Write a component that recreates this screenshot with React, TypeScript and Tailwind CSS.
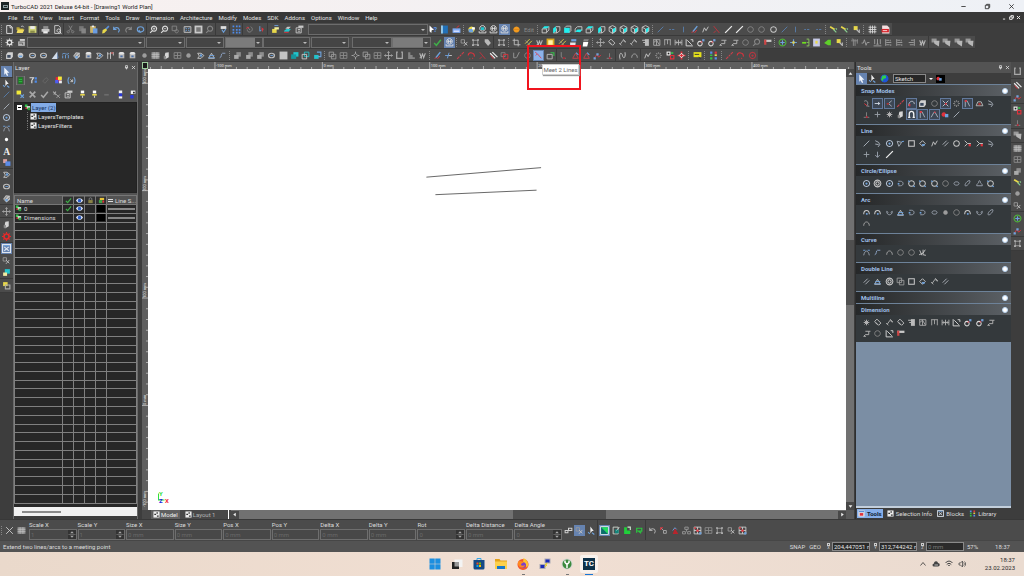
import type { ReactNode } from "react";
import clsx from "clsx";

const W = "#c9c9c9";
const D = "#858585";
const B = "#6ea2dc";
const R = "#e0323c";
const C = "#22c3cc";
const Y = "#e8d84a";
const N = "#35c04a";

const s = (d: string, color = W, width = 1.6) => <path d={d} fill="none" stroke={color} strokeWidth={width} />;
const f = (d: string, color = W) => <path d={d} fill={color} />;

const box = "M3 3h10v10H3z";
const circle = "M8 2.5a5.5 5.5 0 1 0 .01 0z";
const dot = "M8 6a2 2 0 1 0 .01 0z";
const sheet = "M3 1h7l3 3v11H3z";

const glyphs: Record<string, ReactNode> = {
  // files and editing
  new: <>{s(sheet, "#e2e2e2")}{s("M9 1v4h4", "#e2e2e2")}</>,
  open: <>{f("M1 4h5l1 2h6v3H1z", "#b9a53a")}{f("M3 8h12l-3 6H1z", "#f1dc5e")}{s("M9 3c2-2 4-1 5 1", W)}</>,
  save: <>{f("M1 2h14v12H1z", "#cfd27a")}{f("M4 2h8v5H4z", "#ececec")}{f("M4 10h8v4H4z", "#8a8c4a")}</>,
  print: <>{f("M4 2h9v5H4z", "#8f8f8f")}{f("M1 7h14v5H1z", W)}{f("M4 11h8v4H4z", "#ededed")}</>,
  preview: <>{s(sheet)}{s("M10 7a3 3 0 1 0 .01 0zM12 12l3 3", "#e6e6e6")}</>,
  cut: <>{s("M5 1l5 9M11 1L6 10", D)}{s("M4 10a2 2 0 1 0 .01 0zM12 10a2 2 0 1 0 .01 0z", D)}</>,
  copy: <>{f("M2 2h8v9H2z", "#777")}{f("M6 6h8v9H6z", D)}</>,
  paste: <>{f("M2 2h10v12H2z", "#c9b169")}{f("M7 6h8v9H7z", "#6b9ce0")}{f("M5 1h4v3H5z", "#eee")}</>,
  brush: <>{s("M14 2L8 8", "#5c8fd4", 3)}{f("M3 9l5-3 3 3-5 5-4 1z", Y)}</>,
  undo: s("M3 3v5h5M3 8c3-5 9-4 10 1 0 2-1 3-2 4", B, 2),
  redo: s("M13 3v5H8M13 8C10 3 4 4 3 9c0 2 1 3 2 4", D, 2),
  repeat: s("M8 13c-8-1-7-10 0-10s8 9 1 9M5 9l3 4 4-2", B, 2),
  zoomin: <>{s("M9 2a4.500 4.500 0 1 0 .01 0zM6 10l-4 4", "#dedede", 2)}{s("M7 6.500h4M9 4.500v4")}</>,
  zoomout: <>{s("M9 2a4.500 4.500 0 1 0 .01 0zM6 10l-4 4", "#dedede", 2)}{s("M7 6.500h4")}</>,
  zoomwin: <>{s("M2 2h8v8H2z", D)}{s("M10 8a3 3 0 1 0 .01 0z", D)}</>,
  extents: <>{s("M2 3h12v10H2z")}{s("M4 5l3 2M12 5L9 7M4 11l3-2M12 11L9 9", B)}</>,
  fullview: <>{f("M1 1h14v14H1z", W)}{f("M4 4h8v8H4z", "#777")}</>,
  zoomgray: s("M9 2a4.500 4.500 0 1 0 .01 0zM6 10l-4 4", D, 2),
  paint: <>{f("M3 2h10v5H3z", "#dedede")}{s("M5 8l3 5 4-6", B, 2)}</>,
  dots: f("M1 1h3v3H1zM7 1h3v3H7zM12 1h3v3h-3zM1 7h3v3H1zM7 7h3v3H7zM12 7h3v3h-3zM1 12h3v3H1zM7 12h3v3H7zM12 12h3v3h-3z", "#4d8bea"),
  lasso: <>{s("M4 3l5 6M10 3c4 2 4 7 0 9s-6-1-6-4", D)}{s("M2 6l5-2", R)}</>,
  pick: <>{s("M5 2v9l3-2", B)}{f("M8 4l4 3-3 6z", R)}</>,
  layers: <>{f("M2 7h8v7H2z", Y)}{f("M6 4h8v4H6z", "#f3ef9f")}{s("M6 1h7", B)}</>,
  stack: <>{f("M2 10l4-3h8l-4 5H2z", C)}{f("M4 6l4-3h6l-4 4z", W)}{s("M2 13h8", R)}</>,
  props: <>{s("M2 5h9v9H2z")}{f("M6 1h9v4H6z")}{s("M5 8h4M5 11h4")}</>,
  help: <>{f("M1 1l8 8H5l-1 5-3-3z", "#fff")}<text x="8" y="12" fontSize="13" fontWeight="700" fill="#5b95e8">?</text></>,
  book: <>{f("M2 1h12v14H2z", "#2271b8")}{f("M2 1h3v14H2z", "#a5d5ef")}</>,
  toolbox: <>{f("M1 6h14v8H1z", "#7daaf5")}{s("M8 5l5-4", R)}{f("M3 10h10v2H3z", "#eef")}</>,
  gear: <>{s("M8 4a4 4 0 1 0 .01 0z", "#e0e0e0", 2.5)}{s("M8 1v2M8 13v2M1 8h2M13 8h2M3 3l2 2M11 11l2 2M13 3l-2 2M3 13l2-2", "#e0e0e0", 1.8)}</>,
  printset: <>{f("M2 6h12v8H2z", "#b7b7b7")}{f("M5 2h9v3H5z", "#ddd")}{s("M4 9h6v3", "#555")}</>,
  // work planes and views
  globe: <>{f(circle, Y)}{f("M3 7h8v6H3z", B)}{f("M9 4h5v4H9z", "#fff")}</>,
  globe2: <>{s("M8 1a5 5 0 1 0 .01 0z", "#ddd")}{f("M5 4h6v5H5z", C)}{s("M2 11v3h12v-3", "#ddd")}</>,
  globe3: <>{s("M8 1a5 5 0 1 0 .01 0z", "#ddd")}{s("M4 6h8M6 3v6M10 3v6M2 11v3h12v-3", "#ddd")}</>,
  sphere: <>{f(circle, "#f39a1e")}{s("M3 8h10", "#e08818")}</>,
  cubeTop: <>{f("M2 6l4-4h9l-4 4z", "#2ee")}{s("M2 7h8v7H2zM10 13l4-4V3")}</>,
  cubeLeft: <>{f("M2 6l5-4v9l-5 4z", "#2ee")}{s("M7 3h7v7l-5 4H3M8 14V6")}</>,
  cubeFront: <>{f("M2 5h10v9H2z", "#2ee")}{s("M3 5l3-3h8v8l-3 3")}</>,
  cubeIso: <>{f("M8 7l6-3v7l-6 4z", "#2ee")}{s("M8 1l6 3v7l-6 4-6-4V4zM2 4l6 3v8")}</>,
  cubeBase: <>{f("M2 12l4-4h9l-4 5z", "#2ee")}{s("M2 7l4-4h8v7M2 7v6")}</>,
  // lines
  line: s("M3 13L13 3", "#aeb5c0"),
  lineW: s("M2 14L14 2", "#eee", 2.2),
  lineB: s("M3 13L13 3", "#587fae"),
  lineR: s("M2 14l4-4M10 6l4-4M7 9l2-2", "#c8414b", 2),
  dash: s("M4 8h3M9 8h4", "#587fae"),
  vert: s("M8 3v10", "#587fae"),
  perp: <>{s("M3 13h10M8 13V4", D)}{f("M7 11h3v3H7z", "#b23")}</>,
  polyline: s("M3 13L6 5l3 5 4-7", W),
  poly2: <>{s("M2 4l8 2-5 7z", "#aeb5c0")}{s("M10 5l4-1", B, 2)}</>,
  arrowSel: f("M4 1l9 9H9l2 5-2 1-3-5-2 3z", "#eef3fb"),
  node: <>{f("M6 1l6 8H9l-3 4z", "#eee")}{s("M2 11l3 3M9 12l4 3", B, 2)}</>,
  circle: s("M8 3a5 5 0 1 0 .01 0z", W, 1.8),
  circleB: <>{s("M8 2.500a5.500 5.500 0 1 0 .01 0z", "#b7c4d6", 1.8)}{f(dot, B)}</>,
  circle2: s("M8 2a6 6 0 1 0 .01 0zM8 5a3 3 0 1 0 .01 0z", W, 1.8),
  circleP: <>{s("M8 3a5 5 0 1 0 .01 0z", W, 1.8)}{s("M2 3l3 2M11 12l3 2", B, 2)}</>,
  circleD: s("M8 3a5 5 0 1 0 .01 0z", D),
  ellipse: s("M8 5C2 5 2 11 8 11s6-6 0-6z", "#9ea6b2"),
  ellipseT: s("M12 3C8 2 2 10 4 12S14 6 12 3z", "#9ea6b2"),
  arc: <>{s("M3 11C3 2 13 2 13 11", W, 1.8)}{f("M7 9h3v3H7z", B)}</>,
  arcG: s("M3 12C3 3 13 3 13 12", "#a6a6a6", 1.6),
  arcR: <>{s("M2 8c1-7 12-6 11 2", R, 1.8)}{s("M4 14h2M9 13h2", R)}</>,
  arcD: <>{s("M4 4h4c6 0 6 8 0 8H4", "#9ea6b2")}{f("M3 7h3v3H3z", B)}</>,
  arcS: <>{s("M3 12h10c0-3-2-4-3-5s0-4-2-4-1 3-2 4-3 2-3 5z", "#9ea6b2")}</>,
  bowl: s("M3 6c0 8 10 8 10 0l-3 2M3 6l3 2", "#9ea6b2"),
  point: f("M8 5a3 3 0 1 0 .01 0z", "#fff"),
  text: <text x="2" y="14" fontFamily="Liberation Serif" fontSize="17" fontWeight="700" fill="#eee">A</text>,
  square: s(box, W, 1.8),
  diamond: <>{s("M8 3l5 5-5 5-5-5z", W, 1.6)}{f("M7 9h5v3H7z", B)}</>,
  double: s("M3 10l7-7M6 13l7-7", "#b5bac2", 1.6),
  doubleR: <>{s("M2 4l9 9M6 2l9 9", "#eee", 2)}{s("M3 8l5 6", R)}</>,
  fork: <>{s("M3 3l5 5-5 5M8 8h6", W)}{f("M10 9h4v4h-4z", R)}</>,
  hook: s("M4 3l6 3 2 4-3 4M4 9l6 1", "#aeb5c0"),
  arrowDown: s("M8 3v10M4 9l4 4 4-4", "#9ea6b2"),
  bezier: <>{s("M3 13C5 3 11 3 13 13", "#9ea6b2")}{s("M2 4h4M10 4h4", B, 1.6)}</>,
  wave: s("M3 12C7 12 5 4 8 4h5", "#8fa6c8"),
  spline: <>{s("M3 13C2 1 7 3 8 8s5 7 5-5")}{f("M2 12h3v3H2zM11 2h3v3h-3z", D)}</>,
  wcurve: s("M3 4l4 9M2 12l7-3 4-6M9 3v9l5 1", W),
  // solids
  solid: <>{f("M5 2h9v8l-3 4H2V6z", "#d2d2d2")}{f("M4 7h6v5H4z", "#3d4b60")}</>,
  ball: <>{f("M8 3a5 5 0 1 0 .01 0z", W)}{f("M5 8h6v3H5z", B)}</>,
  ballG: f("M8 4a4 4 0 1 0 .01 0z", "#9c9c9c"),
  torus: <>{s("M8 4C1 4 1 12 8 12s7-8 0-8z", "#bdbdbd", 2.2)}{s("M6 8h5", B)}</>,
  cylinder: <>{f("M3 4h10v9H3z", "#b5b5b5")}{f("M3 4c0-3 10-3 10 0s-10 3-10 0z", "#e3e3e3")}{f("M6 8h4v3H6z", "#4b6fa8")}</>,
  cone: <>{f("M13 1v13H3z", "#d2dbe8")}{f("M13 1l2 11-2 2z", "#6991c9")}</>,
  sweep: <>{s("M2 6c5-5 7 3 12-2M3 8v5M8 7v6M13 7v6", B)}</>,
  tube: <>{f("M2 9l5-7 7 1v7l-6 5z", "#c4c4c4")}{s("M4 10l5-6M8 12l5-6", "#555", 1.2)}{f("M6 9h4v4H6z", B)}</>,
  grid: <>{f("M1 2h14v12H1z", "#8f8f8f")}{s("M1 6h14M1 10h14M5.500 2v12M10.500 2v12", "#ccc", 1)}</>,
  gridW: s("M4 1v14M8 1v14M12 1v14M1 4h14M1 8h14M1 12h14", "#ddd", 1.5),
  bool: <>{f("M6 2h8v8H6z", "#8d8d8d")}{f("M2 7h8v7H2z", "#aaa")}</>,
  boolC: <>{f("M6 2h9v8H6z", C)}{f("M2 6h9v8H2z", "#1597a0")}</>,
  boolO: <>{s("M6 2h8v8H6z", C)}{s("M2 6h8v8H2z", W)}</>,
  boolM: <>{f("M2 7h8v7H2z", C)}{s("M7 2h7v8H9", B, 2)}</>,
  blank: f("M1 1h14v14H1z", "#c4c4c4"),
  loop: <>{s("M3 4h6l5 4-5 5H3l3-4z", W)}{f("M7 6h4v4H7z", B)}</>,
  fence: <>{s("M3 2v12M8 2v12M13 2v6M2 5h3M6 5h3", W)}{f("M9 2h4v3H9z", "#b66")}</>,
  prism: <>{s("M3 13L8 4l5 9z")}{s("M4 8h9M2 12h12", B)}</>,
  // modify
  copyO: <>{s("M2 2h8v8H2z", "#9b9b9b")}{s("M6 6h8v8H6z", "#9b9b9b")}</>,
  windows: s("M2 3h12v10H2zM2 8h12M8 3v10", "#8b8b8b"),
  move: s("M8 1v14M1 8h14M6 3l2-2 2 2M6 13l2 2 2-2M3 6L1 8l2 2M13 6l2 2-2 2", "#a8a8a8"),
  target: <>{s("M8 4l4 4-4 4-4-4z", "#aaa")}{s("M8 1v3M8 12v3M1 8h3M12 8h3", "#aaa")}</>,
  cup: s("M3 2v11h10V2M5 2H2M14 2h-3", "#a9a9a9", 2.2),
  stair: f("M2 2h4v5h4v4h4v3H2z", "#858585"),
  mirror: s("M3 4l3 8 2-8 2 8 3-8M3 12h3", "#b7b7b7", 1.8),
  pen: <>{s("M13 2L5 12", B, 2.4)}{s("M3 14l3-3M8 14l4-5", R)}</>,
  tee: <>{s("M2 8h7M9 3L6 13", B)}{s("M9 8h5", W)}</>,
  trim: <>{s("M3 2l10 12", "#c4323c", 1.6)}{s("M3 14l4-4", "#c4323c")}</>,
  squares: <>{s("M2 3h7v7H2z", D)}{s("M6 6h8v8H6z", R)}</>,
  jcurve: s("M3 3v9h4M13 2l-5 10", "#9a9a9a"),
  meet: <>{f("M0 0h16v16H0z", "#8db3ea")}{s("M2 2l4 3M3 8l3-3 7 8", "#d04a5a")}</>,
  chamfer: <>{s("M2 6h9v8H2z", "#bbb")}{s("M8 3h6v6", N, 2)}</>,
  corner: <>{s("M4 2v7c0 3 2 4 8 4", "#8a8a8a")}{f("M7 11h4v3H7z", "#a02a35")}</>,
  tri: <>{s("M3 13h10L8 4z", "#c7434d")}{s("M9 3l4 4", B, 2)}</>,
  zig: <>{s("M2 13l5-7 3 5 4-4", R)}{f("M1 11h4v4H1zM6 4h4v4H6z", B)}</>,
  ring: s("M8 2v3M8 11v3M2 8h3M11 8h3M4 4l2 2M10 10l2 2M12 4l-2 2M4 12l2-2", "#888", 2),
  blocksR: <>{f("M1 1h7v7H1z", "#eee")}{f("M3 3h3v3H3z", "#222")}{s("M8 8h6v6H8z", R, 2)}{f("M9 2h4v3H9z", N)}</>,
  moveR: <>{s("M8 1v14M1 8h14", R, 3)}{s("M8 4l4 4-4 4-4-4z", "#fff", 1.6)}</>,
  note: <>{f("M1 2h14v9H1z", "#e5e01c")}{s("M3 6h8M10 11l4 3", "#333")}</>,
  rgb: <>{f("M2 1h4v4H2zM10 11h4v4h-4z", "#5b8de8")}{f("M10 1h4v4h-4z", R)}{f("M2 11h4v4H2zM2 6h4v3H2z", N)}{f("M10 6h4v3h-4z", Y)}</>,
  rec: <>{s(circle, "#b23640", 2)}{f(dot, "#b23640")}</>,
  check: <>{s("M2 9l4 4 8-10", "#3fae49", 2.6)}</>,
  checkG: s("M2 9l4 4 8-10", "#a8a8a8", 2.6),
  cross: s("M3 3l10 10M13 3L3 13", "#a8a8a8", 3),
  crossW: s("M2 2l12 12M14 2L2 14", "#c9c9c9", 1.6),
  ungroup: <>{s("M2 3h6v6H2z", "#999")}{s("M7 7l6 6M13 7l-6 7", "#c0c0c0")}</>,
  select4: <>{s("M4 4h8v8H4z", "#a0a0a0")}{f("M2 2h3v3H2zM11 2h3v3h-3zM2 11h3v3H2zM11 11h3v3h-3z", "#bbb")}</>,
  tag: f("M3 2h6l5 7-5 5-6-7z", "#b9b9b9"),
  crop: s("M4 1v11h11M1 4h10v11", "#bdbdbd"),
  yellowbox: <>{f("M1 1h14v14H1z", "#d9a821")}{f("M4 4h8v8H4z", "#fff2a8")}</>,
  hatch: <>{s("M2 10l8-8M5 14l9-9", Y)}{s("M2 4l10 10", D)}</>,
  sheetB: <>{f("M4 2h9v4H4z", B)}{f("M2 8h10l-1 6H2z", "#e5e5e5")}</>,
  sheetW: <>{f("M5 2h9l-2 4H4z", "#888")}{f("M4 7h9l-2 8H3z", "#fff")}</>,
  // dimension
  dimH: s("M2 3v10M14 3v10M8 3v10M3 8h10M5 6L3 8l2 2M11 6l2 2-2 2", "#b5b5b5"),
  dimA: s("M3 6l4-4 7 7-4 4zM4 8l4 4", "#c5c5c5", 1.6),
  dimB: s("M2 9l4 4M4 11l5-7 4 4M9 2l5 5", "#b5b5b5"),
  dimBox: <>{f("M7 2h7v12H7z", "#bbb")}{s("M2 4h6M4 8h3", W)}</>,
  dimGrid: s("M2 3h12v10H3V3M3 8l5-4 5 8M8 3v10", "#a9a9a9"),
  dimT: s("M2 3h12M3 3v10M8 3v8M13 3v10", "#a9a9a9"),
  dimX: s("M2 2v12h12M4 4l8 8M10 3h4v4", "#ddd"),
  dimR: <>{s("M7 6a4 4 0 1 0 .01 0z", "#ddd", 1.8)}{s("M8 9l5-6", R)}{f("M11 2h4v4h-4z", B)}</>,
  leader: s("M3 13l3-3h6V4H6M3 13h4M12 4h3", "#b9b9b9"),
  flag: <>{f("M2 3h13v4H2z", W)}{f("M2 3h4v9H2z", "#c44")}</>,
  // snaps
  snapG: <>{s("M8 2a6 6 0 1 0 .01 0z", "#4fae3a", 2)}{s("M8 4v8M4 8h8", B, 2)}</>,
  plusB: <>{s("M8 2v12M2 8h12", B, 2)}{f("M6 6h4v4H6z", Y)}</>,
  greenR: <>{f("M2 7h7v3H2z", "#6fe01e")}{s("M10 2h4M10 8h4M10 14h4M14 2v12", "#7fae5a", 2)}</>,
  greenL: f("M14 3v10H9l-7-4 7-6z", "#5fcf2a"),
  winY: <>{f("M2 1h12v14H2z", "#c8cbe8")}{f("M6 5h4v5H6z", Y)}</>,
  bulb: <>{f("M3 2h7v7H3z", Y)}{s("M8 8l5 5M13 8v6", "#bbb", 2)}</>,
  wand: <>{s("M2 3l8 5", Y, 3)}{s("M8 8l5 5M12 6l2 2", "#8ad08f", 2)}</>,
  pipes: s("M3 2h3v12M9 2v12M13 2v8M2 5h12", "#8f8f8f"),
  pulse: s("M1 9h3l2-6 3 10 2-5h4", "#9f9f9f"),
  forest: s("M3 2v9M8 2v9M13 2v9M1 14h14M6 11h4", "#a0a0a0"),
  alignL: s("M3 2v12M4 4h5M4 8h9M4 12h6M11 3v3M12 11v3", "#a0a0a0"),
  alignR: s("M13 2v12M12 4H7M12 8H3M12 12H5", "#a0a0a0"),
  order: <>{f("M1 1h9v7H1z", "#989898")}{f("M5 5h10l-1 10-8-5z", "#b7b7b7")}</>,
  pdf: <>{f("M2 1h9l4 4v10H2z", "#f4dede")}{f("M1 7h13v6H1z", "#d61f26")}{s("M3 10h8", "#fff", 1.4)}</>,
  snapNo: <>{s("M4 4c5-4 9 5 4 8M8 12l5 1", "#9aa0a8")}{s("M4 8l5 4", R)}</>,
  snapV: <>{s("M3 8h7", "#d0d8e4")}{f("M9 5l4 3-4 3z", "#d0d8e4")}</>,
  snapMid: <>{s("M5 9l7-6M6 8l6 5", "#aeb5c0")}{f("M3 7h4v3H3z", "#a33")}</>,
  snapX: <>{s("M3 3l10 10M13 3L3 13", "#c3cad4")}{f("M7 7h3v3H7z", R)}</>,
  snapQ: <>{s("M3 12C3 2 13 2 13 9", "#c3cad4")}{f("M3 9h3v4H3z", R)}</>,
  star: s("M8 3v10M3 8h10M4.500 4.500l7 7M11.500 4.500l-7 7", "#b6b6b6", 1.7),
  plus: s("M8 3v10M3 8h10", "#9aa0a8"),
  magnet: s("M4 14V7c0-6 8-6 8 0v7M2 13h4M10 13h4", "#f2f2f2", 2.4),
  snapR: <>{s("M4 14V3h3l5 10", "#aeb5c0")}{f("M3 2h4v3H3z", R)}</>,
  tent: <>{s("M2 13L7 4h2l5 9", "#aeb5c0")}{f("M7 3h3v2H7z", R)}</>,
  ballR: <>{f("M5 4a4 4 0 1 0 .01 0z", R)}{f("M7 7h6v6H7z", B)}</>,
  trap: <>{s("M2 12h12l-3-7H5z", "#bbb")}{f("M6 7h4v4H6z", "#a33")}</>,
  // layers panel
  green: <>{s("M1 0h14v16H1z", "#8a8a8a", 1.2)}{f("M4 2h8v12H4z", "#1e7a25")}{s("M5 6h6M5 10h6", N)}</>,
  filter: <>{s("M1 3h7L5 8v5", "#ddd", 2)}{f("M10 2h4v4h-4zM10 8h4v4h-4z", "#4d8bea")}</>,
  eraser: s("M3 9l6-6 4 3-6 7z", "#666"),
  palette: <>{f("M3 2h9v8H3z", "#e23")}{f("M7 1h7v6H7z", "#f6e73c")}{f("M2 7h6v6H2z", "#4d5df0")}{f("M9 8h5v5H9z", "#eee")}</>,
  sync: <>{s("M4 2C1 5 1 11 4 14M12 2c3 3 3 9 0 12", B, 2)}{s("M6 6l4 4M10 6v4H6", W)}</>,
  addLayer: <>{f("M1 1h8v7H1z", "#f1ea3a")}{s("M8 8l6 6M14 8l-6 6", B, 2)}</>,
  delSel: <>{s("M2 3l6 6M7 3L3 8", "#aaa", 2)}{s("M8 8l6 6M14 8l-6 6", "#aaa", 1.5)}</>,
  bulbs: <>{f("M5 1h6v5H5z", "#fff")}{f("M4 7h8v3H4z", Y)}{s("M8 10v4", W, 2)}</>,
  minus: f("M4 7h8v3H4z", "#6c6c6c"),
  eyes: <>{f("M5 1h6v5H5zM5 11h6v4H5z", "#f2f2f2")}{f("M5 6h6v5H5z", "#2a38d8")}</>,
  eyes2: <>{f("M5 1h8v6H5z", "#f2f2f2")}{f("M4 9h6v6H4z", "#2a38d8")}{f("M9 3h3v3H9z", "#222")}</>,
  eye: <>{f("M0 8c4-7 12-7 16 0-4 7-12 7-16 0z", "#dfe7f7")}{f("M8 4a4 4 0 1 0 .01 0z", "#2f5fc4")}</>,
  lock: <>{s("M5 7V4c0-3 6-3 6 0v3", "#999")}{f("M3 7h10v7H3z", "#8a8347")}</>,
  layerIcon: <>{f("M2 1h6v6H2z", N)}{f("M6 5h8v6H6z", "#f0f0f0")}{f("M8 8h6v6H8z", "#2fa03c")}{f("M3 8h4v3H3z", R)}</>,
  tile: <>{f("M1 1h14v14H1z", "#ededed")}{f("M3 6h4v3H3zM8 3h3v3H8zM9 10h4v3H9z", "#333")}</>,
  // side toolbars
  shapeB: <>{f("M2 2h7v7H2z", "#d9a0a0")}{f("M6 6h9v8H6z", "#5a8be8")}</>,
  slab: <>{f("M6 3l6-1v9l-7 4V7z", "#d6d6d6")}{f("M3 9h4v5H3z", "#8a8a8a")}</>,
  gearR: <>{s("M8 3.500a4.500 4.500 0 1 0 .01 0z", "#e82a2a", 3)}{s("M8 0v3M8 13v3M0 8h3M13 8h3M2.500 2.500l2 2M11.500 11.500l2 2M13.500 2.500l-2 2M2.500 13.500l2-2", "#e82a2a", 2)}</>,
  frameX: <>{s("M1 1h14v14H1z", "#dfe6ef", 2)}{s("M4 5l8 7M12 5l-8 7", "#dfe6ef", 1.8)}{s("M3 3h10", B, 2)}</>,
  yellowC: <>{f("M5 2h9v8H5z", C)}{f("M2 8h7v6H2z", "#f2eca0")}</>,
  spark: <>{f("M2 2h8v7H2z", Y)}{s("M6 7h8v7H6z", "#aaa", 2)}</>,
  drop: <>{f("M4 2h10v5H4z", "#e7c33a")}{f("M2 7h8v7H2z", "#3da445")}{f("M10 8h4v5h-4z", R)}</>,
  earth: <>{f("M8 1a7 7 0 1 0 .01 0z", "#1f55d8")}{f("M4 3l6-1 1 5-5 2-1 4-3-3z", "#2fd04a")}</>,
  // inspector
  link: <>{s("M2 12h5V8H2zM8 4h6v4H8zM7 8l2-2", "#d0d0d0", 1.8)}</>,
  greenTri: <>{s("M1 1h14v14H1z", "#dfe8ef", 1.6)}{f("M2 2h12v12z", "#1fe05a")}{f("M2 2l12 12H2z", "#0b6f6a")}</>,
  greenTri2: <>{s("M2 2h9v12H2z", "#cfd8cf")}{f("M5 6h7v7H5z", "#14857a")}{s("M8 8l5-6", W)}</>,
  greenL2: <>{f("M2 2h5v6h6v6H2z", "#20d03a")}{s("M8 2h5v5", "#cfe8cf", 2)}</>,
  greenQ: s("M3 12V4h9v5H6l5 4", "#2bc53f", 2.2),
  redgrid: <>{s("M2 2h12v12H2zM2 8h12M8 2v12", "#ccc")}{f("M6 6h4v4H6zM2 2h3v3H2z", R)}{f("M11 11h4v4h-4z", B)}</>,
  toolsTab: <>{f("M1 1h14v14H1z", "#e4e4e4")}{f("M2 2h12v3H2z", "#5b8fd8")}{f("M4 7h8v6H4z", R)}</>,
  scaleR: <>{s("M3 3l5 5M8 8h5v5H8z", "#aaa")}{s("M3 3h4M3 3v4", R, 2)}</>,
  redTri: <>{f("M7 4l6 10H3z", "#b8242c")}{s("M3 8l4-5 3 3", B)}</>,
  tree: s("M5 2h6v4H5zM1 10h5v4H1zM10 10h5v4h-5zM8 6v4", "#999"),
  undoG: s("M3 3v5h5M3 8c3-5 9-4 10 1 0 2-1 3-2 4", "#a8a8a8", 1.8),
};

type IconProps = { name: string; outlined?: boolean; children?: ReactNode };

const IconBtn = ({ name, outlined, children }: IconProps) => {
  const active = name.endsWith("*");
  const key = active ? name.slice(0, -1) : name;
  return (
    <div className="relative flex min-h-0 min-w-0 flex-1 items-center justify-center">
      <button
        type="button"
        aria-label={key}
        className={clsx(
          "flex h-[11px] w-[11px] shrink-0 items-center justify-center hover:bg-[#66758c]",
          active && (outlined ? "border border-[#62799c] bg-[#3c4654]" : "bg-[#6683b0]"),
        )}
      >
        <svg viewBox="0 0 16 16" className="h-[9px] w-[9px] shrink-0" aria-hidden="true">
          {glyphs[key]}
        </svg>
      </button>
      {children}
    </div>
  );
};

const Icons = ({ names, className }: { names: string; className: string }) => (
  <div className={clsx("flex shrink-0", className)}>
    {names.split(" ").map((name, i) => (
      <IconBtn key={i} name={name} />
    ))}
  </div>
);

const Grip = () => (
  <div className="flex w-[4px] shrink-0 items-center gap-px pl-px">
    <i className="h-[9px] w-px border-l border-dotted border-[#858585]" />
  </div>
);

const Gap = () => <div className="w-[2px] shrink-0 border-l border-[#3a3a3a]" />;

const Combo = ({ label, className, filled }: { label: string; className: string; filled?: boolean }) => (
  <div className={clsx("relative h-[11px] shrink-0 self-center border border-[#6c6c6c]", className)}>
    <select
      aria-label={label}
      className={clsx("block h-full w-full appearance-none", filled ? "border-r-[7px] border-[#484848] bg-[#7b7b7b]" : "bg-[#454545]")}
    />
    <i className="pointer-events-none absolute top-[4px] right-[2px] border-x-[2px] border-t-[2px] border-x-transparent border-t-[#bcbcbc]" />
  </div>
);

const Bar = ({ children }: { children: ReactNode }) => (
  <div className="flex h-[13px] w-fit border-b border-[#3a3a3a] bg-[#4b4b4b]">{children}</div>
);

const menus = ["File", "Edit", "View", "Insert", "Format", "Tools", "Draw", "Dimension", "Architecture", "Modify", "Modes", "SDK", "Addons", "Options", "Window", "Help"];

function TitleBar() {
  return (
    <header className="flex h-[12px] shrink-0 items-center bg-linear-to-r from-[#f8f0ef] to-[#eef1f6] text-[#222]">
      <div className="ml-[1px] flex h-[8px] w-[8px] items-center justify-center bg-[#1c2326]">
        <i className="h-[3px] w-[5px] border border-[#8a9a9e]" />
      </div>
      <h1 className="ml-[2px] text-[6px]">TurboCAD 2021 Deluxe 64-bit - [Drawing1 World Plan]</h1>
      <div className="mr-[9px] ml-auto flex gap-[17px]">
        {["M3 8h10", "M3 5h8v8H3zM6 5V3h7v7h-2", "M3 3l10 10M13 3L3 13"].map((d, i) => (
          <button key={i} type="button" aria-label={["Minimize", "Restore", "Close"][i]}>
            <svg viewBox="0 0 16 16" className="h-[7px] w-[7px]">{s(d, "#222", 1.8)}</svg>
          </button>
        ))}
      </div>
    </header>
  );
}

function MenuBar() {
  return (
    <nav className="flex h-[11px] shrink-0 items-center bg-[#383838] pl-[8px] text-[6px] text-[#e4e4e4]">
      <div className="flex gap-[6px]">
        {menus.map((m) => (
          <button key={m} type="button">{m}</button>
        ))}
      </div>
      <div className="mr-[3px] ml-auto flex gap-[2px]">
        {["M3 13h7", "M2 6h8v8H2zM6 6V2h8v8h-4", "M3 3l10 10M13 3L3 13"].map((d, i) => (
          <button key={i} type="button" aria-label={["Minimize drawing", "Restore drawing", "Close drawing"][i]}>
            <svg viewBox="0 0 16 16" className="h-[5px] w-[5px]">{s(d, "#eee", 3)}</svg>
          </button>
        ))}
      </div>
    </nav>
  );
}

function Toolbars() {
  return (
    <div className="shrink-0 bg-[#3d3d3d]">
      <Bar>
        <Grip />
        <Icons className="w-[34px]" names="new open save" />
        <Gap />
        <Icons className="w-[23px]" names="print preview" />
        <Gap />
        <Icons className="w-[46px]" names="cut copy paste brush" />
        <Icons className="w-[35px]" names="undo redo repeat" />
        <Gap />
        <Icons className="w-[67px]" names="zoomin zoomout zoomwin extents fullview zoomgray" />
        <Gap />
        <Icons className="w-[12px]" names="paint" />
        <Gap />
        <Icons className="w-[11px]" names="dots" />
        <Gap />
        <Icons className="w-[23px]" names="lasso pick" />
        <Gap />
        <Icons className="w-[37px]" names="layers stack props" />
        <Combo label="View" className="ml-[2px] w-[120px]" />
        <Icons className="w-[34px]" names="help book toolbox" />
        <Grip />
        <Icons className="w-[44px]" names="globe globe2 globe3 globe3*" />
        <Icons className="w-[12px]" names="sphere" />
        <button type="button" className="w-[14px] text-[6px] text-[#8a8a8a]">Edit</button>
        <Grip />
        <Icons className="w-[111px]" names="cubeTop cubeLeft cubeFront cubeBase cubeTop cubeLeft cubeIso cubeIso cubeIso cubeIso" />
        <Grip />
        <Icons className="w-[135px]" names="lineB dash vert pen polyline trim lineW lineW circleD circleD circle lineB" />
        <Icons className="w-[34px]" names="vert dash dash" />
        <Grip />
        <Icons className="w-[34px]" names="wand wand bulb" />
        <Grip />
        <Icons className="w-[26px]" names="gridW pdf" />
      </Bar>
      <Bar>
        <Grip />
        <Icons className="w-[23px]" names="gear printset" />
        <Combo label="Layer" className="w-[118px]" />
        <Combo label="Colour" className="ml-px w-[39px]" />
        <Combo label="Line style" className="ml-px w-[38px]" />
        <Combo label="Line width" className="ml-px w-[38px]" filled />
        <Combo label="Line scale" className="w-[47px]" />
        <Combo label="Brush style" className="ml-px w-[38px]" />
        <Combo label="Brush colour" className="ml-[3px] w-[40px]" />
        <Combo label="Brush pattern" className="w-[39px]" filled />
        <Icons className="w-[24px]" names="check globe3*" />
        <Grip />
        <Icons className="w-[34px]" names="ungroup select4 tag" />
        <Gap />
        <Icons className="w-[12px]" names="select4" />
        <Grip />
        <Icons className="w-[80px]" names="crop hatch mirror yellowbox hatch sheetB sheetW" />
        <Grip />
        <Icons className="w-[178px]" names="move dimA dimB dimB dimBox dimGrid dimT dimH dimX dimR dimR leader leader circleD zoomgray flag" />
        <Grip />
        <Icons className="w-[68px]" names="snapG plusB greenR winY greenL bulb" />
        <Grip />
        <Icons className="w-[79px]" names="pipes pulse forest alignL alignL alignR mirror" />
        <Gap />
        <Icons className="w-[45px]" names="order order order order" />
      </Bar>
      <Bar>
        <Grip />
        <Icons className="w-[224px]" names="solid ball torus torus cone sweep tube cylinder loop fence cylinder cylinder ballG grid slab windows ballG loop prism wave" />
        <Grip />
        <Icons className="w-[91px]" names="bool bool bool torus blank boolC boolO boolM" />
        <Grip />
        <Icons className="w-[101px]" names="copyO windows target copyO windows move cup stair mirror" />
        <Grip />
        <Icons className="w-[101px]" names="pen tee lineR arcR trim doubleR squares jcurve circleD" />
        <div className="flex w-[11px]">
          <IconBtn name="meet*">
            <div className="pointer-events-none absolute -top-[4px] -left-[6px] z-10 h-[45px] w-[54px] border-2 border-[#f0141e]">
              <div role="tooltip" className="mt-[17px] ml-[13px] w-[37px] border border-[#d0d0d0] bg-white text-center text-[6px] leading-[9px] whitespace-nowrap text-[#6a6a6a] shadow-[1px_1px_1px_#999]">
                Meet 2 Lines
              </div>
            </div>
          </IconBtn>
        </div>
        <Icons className="w-[12px]" names="chamfer" />
        <Gap />
        <Icons className="w-[57px]" names="corner tri tri zig perp" />
        <Gap />
        <Icons className="w-[23px]" names="spline arcG" />
        <Gap />
        <Icons className="w-[45px]" names="polyline ring blocksR moveR" />
        <Grip />
        <Icons className="w-[12px]" names="note" />
        <Grip />
        <Icons className="w-[13px]" names="rgb" />
        <Grip />
        <Icons className="w-[34px]" names="lineR arcR rec" />
      </Bar>
    </div>
  );
}

const VIcons = ({ names, className }: { names: string; className: string }) => (
  <div className={clsx("flex flex-col border-b border-[#3a3a3a]", className)}>
    {names.split(" ").map((name, i) => (
      <IconBtn key={i} name={name} />
    ))}
  </div>
);

const PanelTitle = ({ children }: { children: string }) => (
  <div className="flex h-[11px] shrink-0 items-center bg-[#535353] px-[1px] text-[6px] text-[#e4e4e4]">
    <h2>{children}</h2>
    <div className="ml-auto flex gap-[2px]">
      {["M5 2h6v7H5zM3 9h10M8 9v5", "M3 3l10 10M13 3L3 13"].map((d, i) => (
        <button key={i} type="button" aria-label={`${i ? "Close" : "Pin"} ${children}`}>
          <svg viewBox="0 0 16 16" className="h-[5px] w-[5px]">{s(d, "#ddd", 2.6)}</svg>
        </button>
      ))}
    </div>
  </div>
);

const Glyph = ({ name }: { name: string }) => (
  <svg viewBox="0 0 16 16" className="h-[7px] w-[7px] shrink-0" aria-hidden="true">{glyphs[name]}</svg>
);

const layerRows = [
  { name: "0", checked: true },
  { name: "Dimensions", checked: false },
];

function LayerPanel() {
  return (
    <aside className="flex w-[125px] shrink-0 flex-col border-x border-[#6a6a6a] bg-[#535353]">
      <PanelTitle>Layer</PanelTitle>
      <div className="flex h-[14px] shrink-0">
        <Icons className="w-[64px]" names="green filter eraser palette sync" />
      </div>
      <div className="flex h-[15px] shrink-0">
        <Icons className="w-[60px]" names="addLayer cross checkG delSel props" />
        <Icons className="ml-[3px] w-[35px]" names="bulbs bulbs minus" />
        <Icons className="ml-[2px] w-[24px]" names="eyes eyes2" />
      </div>
      <ul className="mb-[2px] h-[91px] shrink-0 border border-[#222] bg-[#272727] text-[6px] leading-[9px] whitespace-nowrap text-[#e4e4e4]">
        <li className="flex items-center pl-[2px]">
          <i className="mr-[2px] flex h-[5px] w-[5px] items-center bg-white px-px"><b className="h-px w-full bg-black" /></i>
          <Glyph name="layerIcon" />
          <span className="bg-[#82abe6] px-px text-[#16315e]">Layer (2)</span>
        </li>
        {["LayersTemplates", "LayersFilters"].map((t) => (
          <li key={t} className="ml-[12px] flex items-center border-l border-dotted border-[#777] pl-[2px]">
            <Glyph name="tile" />
            <span className="ml-px">{t}</span>
          </li>
        ))}
      </ul>
      <div className="min-h-0 flex-1 overflow-hidden bg-[#272727] pb-[3px]">
        <table className="h-full w-full table-fixed border-collapse text-left text-[6px] leading-[7px] text-[#dcdcdc] [&_td]:border [&_td]:border-[#808080] [&_td]:p-0 [&_th]:border [&_th]:border-[#777] [&_th]:p-0">
          <thead>
            <tr className="h-[9px] bg-[#535353]">
              <th className="w-[48px] font-normal"><span className="pl-[2px]">Name</span></th>
              {["check", "eye", "lock", "drop"].map((n) => (
                <th key={n} className="w-[11px]"><div className="flex justify-center bg-[#303030]"><Glyph name={n} /></div></th>
              ))}
              <th className="font-normal">
                <div className="flex items-center whitespace-nowrap">
                  <i className="mr-[2px] ml-[1px] h-[3px] w-[6px] border-y border-[#ddd]" />
                  Line S...
                </div>
              </th>
            </tr>
          </thead>
          <tbody>
            {layerRows.map((r) => (
              <tr key={r.name} className="h-[8px]">
                <td>
                  <div className="flex items-center gap-[2px]"><Glyph name="layerIcon" />{r.name}</div>
                </td>
                <td>{r.checked && <div className="flex justify-center"><Glyph name="check" /></div>}</td>
                <td><div className="flex justify-center"><Glyph name="eye" /></div></td>
                <td />
                <td><div className="mx-px h-[7px] bg-black" /></td>
                <td><i className="mx-[1px] block h-[2px] border-y border-[#888]" /></td>
              </tr>
            ))}
            {Array.from({ length: 32 }, (_, i) => (
              <tr key={i} className="h-[8px]">
                <td /><td /><td /><td /><td /><td />
              </tr>
            ))}
          </tbody>
        </table>
      </div>
      <div className="flex h-[9px] shrink-0 items-center bg-[#f1f1f1] pl-[8px]">
        <i className="h-[2px] w-[39px] bg-[#8a8a8a]" />
      </div>
      <div className="h-[3px] shrink-0 bg-[#3d3d3d]" />
    </aside>
  );
}

const ticks = Array.from({ length: 66 }, (_, i) => i);

function TopRuler() {
  return (
    <svg className="block h-[7px] w-full bg-[#5f5f5f]" aria-hidden="true">
      {ticks.map((i) => (
        <path key={i} d={`M${2.5 + i * 10.74} ${i % 10 === 6 ? 0 : i % 5 === 1 ? 4 : 5}V7`} stroke="#d0d0d0" strokeWidth="0.7" />
      ))}
      {["-100 mm", "0 mm", "100 mm", "200 mm", "300 mm", "400 mm"].map((t, i) => (
        <text key={t} x={68 + i * 107.4} y="4.5" fontSize="4" fill="#e4e4e4">{t}</text>
      ))}
    </svg>
  );
}

function SideRuler() {
  return (
    <svg className="block h-full w-[6px] shrink-0 bg-[#5f5f5f]" aria-hidden="true">
      {ticks.slice(0, 42).map((i) => (
        <path key={i} d={`M${i % 10 === 1 ? 0 : 4} ${3.5 + i * 10.74}H6`} stroke="#d0d0d0" strokeWidth="0.7" />
      ))}
      {["300 mm", "200 mm", "100 mm", "0 mm", "-100 mm"].map((t, i) => (
        <text key={t} transform={`translate(4 ${Math.min(15 + i * 107, 438)}) rotate(-90)`} fontSize="4" fill="#e4e4e4">{t}</text>
      ))}
    </svg>
  );
}

const ScrollBtn = ({ dir }: { dir: "up" | "down" | "left" | "right" }) => (
  <button type="button" aria-label={`Scroll ${dir}`} className="flex h-[8px] w-[8px] shrink-0 items-center justify-center bg-[#484848]">
    <svg viewBox="0 0 8 8" className="h-[5px] w-[5px]">
      {f({ up: "M1 6l3-4 3 4z", down: "M1 2l3 4 3-4z", left: "M6 1L2 4l4 3z", right: "M2 1l4 3-4 3z" }[dir], "#eee")}
    </svg>
  </button>
);

function Canvas() {
  return (
    <main className="flex min-w-0 flex-1 flex-col pr-px pl-[4px]">
      <div className="flex h-[7px] shrink-0 bg-[#5f5f5f]">
        <i className="h-[7px] w-[6px] shrink-0 border border-[#9ecf9e] bg-[#1c1c1c]" />
        <TopRuler />
      </div>
      <div className="flex min-h-0 flex-1">
        <SideRuler />
        <div className="min-w-0 flex-1 bg-white">
          <svg viewBox="0 0 697 440" preserveAspectRatio="xMinYMin" className="block h-full w-full" role="img" aria-label="Drawing">
            <path d="M278 108L392.500 98.500M287 125.500L388 121" stroke="#444" strokeWidth="0.8" fill="none" />
            <path d="M10.500 424v6.500h6" stroke="#2fe03a" fill="none" />
            <text x="11" y="426" fontSize="6" fontWeight="700" fill="#2fe03a">Y</text>
            <text x="11" y="433" fontSize="6" fontWeight="700" fill="#1a1ae0">Z</text>
            <text x="17" y="433" fontSize="6" fontWeight="700" fill="#f0202a">X</text>
          </svg>
        </div>
        <div className="flex w-[8px] shrink-0 flex-col bg-[#717171]">
          <ScrollBtn dir="up" />
          <div className="mt-[163px] h-[65px] bg-[#4f4f4f]" />
          <div className="mt-auto"><ScrollBtn dir="down" /></div>
        </div>
      </div>
      <div className="flex h-[9px] shrink-0 bg-[#484848] text-[6px] leading-[9px] text-[#b4b4b4]">
        <button type="button" className="ml-[9px] flex items-center gap-px bg-[#606060] px-[2px] text-[#eee]"><Glyph name="tile" />Model</button>
        <button type="button" className="ml-[3px] flex items-center gap-px px-[2px]"><Glyph name="tile" />Layout 1</button>
        <i className="ml-[10px] w-px bg-white" />
        <div className="ml-[2px] flex flex-1 items-center bg-[#717171]">
          <ScrollBtn dir="left" />
          <div className="flex h-full flex-1 justify-center pl-[42px]"><i className="h-full w-[93px] bg-[#4f4f4f]" /></div>
          <ScrollBtn dir="right" />
        </div>
        <i className="w-[8px] bg-[#5a5a5a]" />
      </div>
    </main>
  );
}

const sections = [
  { title: "Snap Modes", icons: "snapNo snapV* snapMid* lineR snapQ* solid circleD snapX* ring snapR* trap hook perp plus star slab magnet* snapR* tent* ballR line", height: "h-[40px]" },
  { title: "Line", icons: "line hook circleB poly2 square diamond polyline double circle fork fork hook plus arrowDown lineW", height: "h-[40px]" },
  { title: "Circle/Ellipse", icons: "circleB circle2 circleB arcD circleP circleP circleP circleD ellipse ellipseT arcS circleP", height: "h-[29px]" },
  { title: "Arc", icons: "arc arc bowl prism arcD arcD ellipse ballG circleD arc bowl ellipseT arcG", height: "h-[40px]" },
  { title: "Curve", icons: "bezier wave arcG circleD circleD wcurve", height: "h-[29px]" },
  { title: "Double Line", icons: "double prism circle2 copyO square diamond dimB double", height: "h-[29px]" },
  { title: "Multiline", icons: "", height: "h-[12px]" },
  { title: "Dimension", icons: "star dimA dimB dimA dimBox dimGrid dimT dimH dimX dimR dimR leader leader circleD dimX flag", height: "h-[39px]" },
];

function ToolsPanel() {
  return (
    <aside className="flex w-[156px] shrink-0 flex-col border-l border-[#2e2e2e] bg-[#3d3d3d]">
      <PanelTitle>Tools</PanelTitle>
      <div className="flex h-[11px] shrink-0 items-center">
        <Icons className="w-[34px]" names="arrowSel* node earth" />
        <input aria-label="Tool set" defaultValue="Sketch" className="ml-[3px] h-[9px] w-[33px] border border-[#888] bg-[#262626] pl-px text-[6px] text-[#e4e4e4]" />
        <i className="mx-[3px] border-x-[2px] border-t-[2px] border-x-transparent border-t-white" />
        <div className="h-[8px] w-[9px] bg-black"><Glyph name="ballR" /></div>
      </div>
      <div className="min-h-0 flex-1 border-b-2 border-[#c3cfdc] bg-[#7b8ea4]">
        {sections.map(({ title, icons, height }) => (
          <section key={title} className={clsx("border-t border-[#6d8299] bg-[#34393c]", height)}>
            <div className="flex h-[11px] items-center bg-linear-to-r from-[#262829] to-[#5c6166] pr-[3px] pl-[5px] text-[6px] font-bold text-[#9fbfe6]">
              <h3>{title}</h3>
              <button type="button" aria-label={`Toggle ${title}`} className="ml-auto h-[6px] w-[6px] rounded-full border border-[#b9d4f0] bg-white" />
            </div>
            {icons && (
              <div className="mt-[2px] ml-[5px] grid w-[135px] auto-rows-[11px] grid-cols-12">
                {icons.split(" ").map((name, i) => (
                  <IconBtn key={i} name={name} outlined />
                ))}
              </div>
            )}
          </section>
        ))}
      </div>
      <div className="flex h-[11px] shrink-0 items-center gap-[3px] pl-px text-[6px] whitespace-nowrap text-[#dcdcdc]">
        {["Tools", "Selection Info", "Blocks", "Library"].map((t, i) => (
          <button key={t} type="button" className={clsx("flex h-[9px] items-center gap-[2px] px-[1px]", i === 0 && "bg-[#86aee8] font-bold text-[#101c33]")}>
            <Glyph name={["toolsTab", "tile", "frameX", "rgb"][i]} />
            {t}
          </button>
        ))}
      </div>
    </aside>
  );
}

const fields = [
  { label: "Scale X", value: "1", spin: true },
  { label: "Scale Y", value: "1", spin: true },
  { label: "Size X", value: "0 mm" },
  { label: "Size Y", value: "0 mm" },
  { label: "Pos X", value: "0 mm" },
  { label: "Pos Y", value: "0 mm" },
  { label: "Delta X", value: "0 mm" },
  { label: "Delta Y", value: "0 mm" },
  { label: "Rot", value: "0", spin: true },
  { label: "Delta Distance", value: "0 mm" },
  { label: "Delta Angle", value: "0", spin: true },
];

function Inspector() {
  return (
    <div className="flex h-[21px] shrink-0 border-t border-[#383838] bg-[#4b4b4b]">
      <Grip />
      <Icons className="w-[23px]" names="crossW grid" />
      <div className="ml-[2px] flex w-[533px] shrink-0 gap-px text-[6px] text-[#dcdcdc]">
        {fields.map(({ label, value, spin }) => (
          <label key={label} className="flex min-w-0 flex-1 flex-col leading-[9px] whitespace-nowrap">
            {label}
            <span className="flex h-[11px] border border-[#6e6e6e]">
              <input defaultValue={value} className="w-0 min-w-0 flex-1 bg-[#484848] pl-px text-[6px] text-[#686868]" />
              {spin && (
                <svg viewBox="0 0 8 10" className="h-[9px] w-[8px] bg-[#333]">
                  <path d="M2 3.500L4 1.500l2 2zM2 6.500l2 2 2-2z" fill="#aaa" />
                  <path d="M0 5h8" stroke="#666" />
                </svg>
              )}
            </span>
          </label>
        ))}
      </div>
      <Icons className="ml-px w-[34px]" names="link ungroup* node" />
      <Gap />
      <Icons className="w-[46px]" names="greenTri* greenTri2 greenL2 greenQ" />
      <Gap />
      <Icons className="w-[101px]" names="undoG scaleR redTri tree redgrid windows select4 ungroup redgrid" />
    </div>
  );
}

function StatusBar() {
  return (
    <div className="flex h-[12px] shrink-0 items-center border-t border-[#464646] bg-[#535353] pl-[3px] text-[6px] leading-[8px] text-[#dcdcdc]">
      <span>Extend two lines/arcs to a meeting point</span>
      <div className="ml-auto flex items-center">
        <button type="button" className="mr-[4px]">SNAP</button>
        <button type="button" className="mr-[5px]">GEO</button>
        {[["X", "204,447051 mm"], ["Y", "312,744242 mm"], ["Z", "0 mm"]].map(([axis, value]) => (
          <label key={axis} className="mr-[3px] flex items-center gap-px">
            <span className="flex w-[5px] flex-col items-center text-[4px] leading-[4px]"><i className="h-[3px] w-[3px] border border-[#ccc]" />{axis}</span>
            <input
              defaultValue={value}
              className={clsx("h-[9px] w-[38px] border border-[#8a8a8a] bg-[#2b2b2b] pl-px text-[6px]", axis === "Z" ? "text-[#777]" : "text-[#e4e4e4]")}
            />
          </label>
        ))}
        <span className="mr-[17px]">57%</span>
        <span className="mr-[14px]">18:37</span>
      </div>
    </div>
  );
}

const apps: { label: string; art: ReactNode; open?: boolean }[] = [
  { label: "Start", art: f("M1 1h10.500v10.500H1zM12.500 1H23v10.500H12.500zM1 12.500h10.500V23H1zM12.500 12.500H23V23H12.500z", "#1c8fe0") },
  { label: "Task view", art: <>{f("M7 3h16v15H7z", "#f4f4f4")}{f("M2 8h14v14H2z", "#222")}{f("M7 8h9v9H7z", "#9a9a9a")}</> },
  { label: "Store", art: <>{s("M8 5V1h8v4", "#36a6e8", 2)}{f("M1 4h22v16q0 3-3 3H4q-3 0-3-3z", "#154a86")}{f("M7 9h4v4H7z", "#f25022")}{f("M12 9h4v4h-4z", "#7fba00")}{f("M7 14h4v4H7z", "#00a4ef")}{f("M12 14h4v4h-4z", "#ffb900")}</> },
  { label: "Explorer", art: <>{f("M0 2h9l2 3h13v6H0z", "#e3a21a")}{f("M0 7h24v15H0z", "#fcd04a")}{f("M4 16h16v6H4z", "#1777c8")}</> },
  { label: "Firefox", open: true, art: <>{f("M12 2a11 11 0 1 0 .01 0z", "#f4552e")}{f("M13 0c8 4 12 12 7 19l-8-9z", "#ffc42e")}{f("M12 8a6 6 0 1 0 .01 0z", "#7a3fd0")}{f("M2 8c4-4 8 0 12 0-2 3-6 2-6 5s5 3 8 1c-1 7-12 7-14-1z", "#ff8a1f")}</> },
  { label: "PuTTY", art: <>{f("M11 1h12v10H11zM1 12h12v10H1z", "#a9a9b4")}{f("M13 3h8v6h-8zM3 14h8v6H3z", "#1c2ab8")}{s("M17 10l-5 3 4 1-5 4", "#e8d020", 2)}</> },
  { label: "KeePass", open: true, art: <>{f("M12 1a11 11 0 1 0 .01 0z", "#d5d8d5")}{f("M12 3a9 9 0 1 0 .01 0z", "#3b8a3e")}{s("M8 5v4l4 4 4-4V5M12 12v8", "#fff", 3)}</> },
];

function Taskbar() {
  return (
    <footer className="relative flex h-[24px] shrink-0 items-center justify-center bg-linear-to-r from-[#ead9cb] via-[#f1dfd3] to-[#eadbd0] text-[#2a2a2a]">
      <div className="flex">
        {apps.map(({ label, art, open }) => (
          <button key={label} type="button" aria-label={label} className="relative flex h-[22px] w-[22px] items-center justify-center">
            <svg viewBox="0 0 24 24" className="h-[12px] w-[12px]">{art}</svg>
            {open && <i className="absolute bottom-0 left-[10px] h-px w-[3px] bg-[#777]" />}
          </button>
        ))}
        <button type="button" className="relative flex h-[22px] w-[22px] items-center justify-center">
          <i className="absolute inset-x-[2px] inset-y-[2px] -z-0 rounded-xs bg-white/60" />
          <b className="relative flex h-[12px] w-[12px] items-center justify-center bg-[#0d3048] text-[8px] leading-none text-white">TC</b>
          <i className="absolute bottom-0 left-[7px] h-px w-[8px] bg-[#1777d8]" />
        </button>
      </div>
      <div className="absolute right-[9px] flex items-center gap-[5px]">
        {[
          s("M3 11l5-6 5 6", "#333"),
          <>{f("M4 13a3 3 0 0 1 0-6 4 4 0 0 1 8-1 3.500 3.500 0 0 1 0 7z", "#444")}{f("M5 9h7v2H5z", "#bbb")}</>,
          s("M1 6c4-5 10-5 14 0M3.500 9c3-3 6-3 9 0M6 11.500c1-1 3-1 4 0", "#444", 2),
          s("M2 6v4h3l4 4V2L5 6zM11 5c2 2 2 4 0 6M13 3c3 3 3 7 0 10", "#444", 1.5),
        ].map((icon, i) => (
          <svg key={i} viewBox="0 0 16 16" className="h-[8px] w-[8px]">{icon}</svg>
        ))}
        <time className="ml-[14px] text-right text-[6px] leading-[8px]">18:37<br />23.02.2023</time>
      </div>
    </footer>
  );
}

export default function App() {
  return (
    <div className="flex h-screen flex-col overflow-hidden bg-[#3d3d3d] [font-family:Roboto,'Noto_Sans',sans-serif]">
      <TitleBar />
      <MenuBar />
      <Toolbars />
      <div className="flex min-h-0 flex-1">
        <div className="w-[13px] shrink-0">
          <div className="bg-[#4b4b4b] pt-[3px]">
            <VIcons className="h-[13px]" names="arrowSel*" />
            <VIcons className="h-[91px]" names="node lineB line circleB bezier point text shapeB" />
            <VIcons className="h-[36px]" names="loop torus tube" />
            <VIcons className="h-[13px]" names="move" />
            <VIcons className="h-[25px]" names="slab gearR" />
            <VIcons className="h-[36px]" names="frameX* ungroup yellowC" />
            <VIcons className="h-[14px]" names="spark" />
          </div>
        </div>
        <LayerPanel />
        <Canvas />
        <ToolsPanel />
        <div className="w-[13px] shrink-0">
          <div className="bg-[#4b4b4b] pt-[3px]">
            <VIcons className="h-[14px]" names="cup" />
            <VIcons className="h-[25px]" names="doubleR zig" />
            <VIcons className="h-[25px]" names="blocksR perp" />
            <VIcons className="h-[14px]" names="order" />
            <VIcons className="h-[69px]" names="grid windows bool wand ballG ungroup" />
            <VIcons className="h-[25px]" names="snapG zig" />
            <VIcons className="h-[14px]" names="select4" />
          </div>
        </div>
      </div>
      <Inspector />
      <StatusBar />
      <Taskbar />
    </div>
  );
}
